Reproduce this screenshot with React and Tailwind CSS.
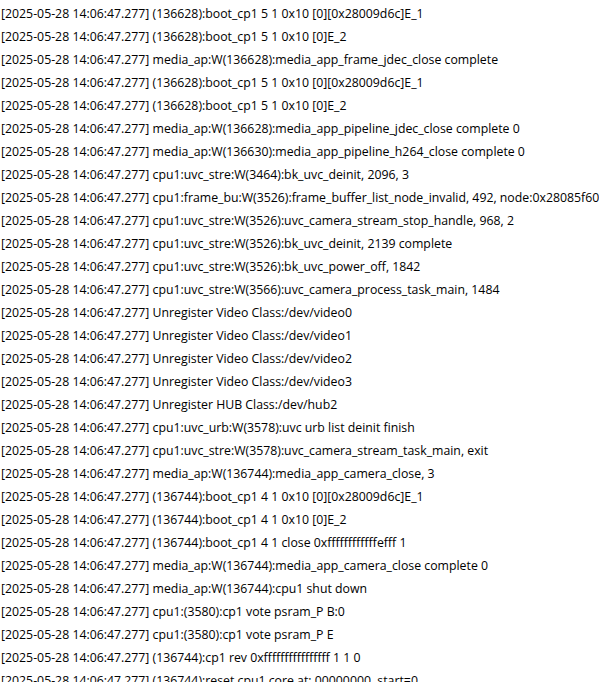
const TS = "[2025-05-28 14:06:47.277] ";

const LINES = [
  "(136628):boot_cp1 5 1 0x10 [0][0x28009d6c]E_1",
  "(136628):boot_cp1 5 1 0x10 [0]E_2",
  "media_ap:W(136628):media_app_frame_jdec_close complete",
  "(136628):boot_cp1 5 1 0x10 [0][0x28009d6c]E_1",
  "(136628):boot_cp1 5 1 0x10 [0]E_2",
  "media_ap:W(136628):media_app_pipeline_jdec_close complete 0",
  "media_ap:W(136630):media_app_pipeline_h264_close complete 0",
  "cpu1:uvc_stre:W(3464):bk_uvc_deinit, 2096, 3",
  "cpu1:frame_bu:W(3526):frame_buffer_list_node_invalid, 492, node:0x28085f60",
  "cpu1:uvc_stre:W(3526):uvc_camera_stream_stop_handle, 968, 2",
  "cpu1:uvc_stre:W(3526):bk_uvc_deinit, 2139 complete",
  "cpu1:uvc_stre:W(3526):bk_uvc_power_off, 1842",
  "cpu1:uvc_stre:W(3566):uvc_camera_process_task_main, 1484",
  "Unregister Video Class:/dev/video0",
  "Unregister Video Class:/dev/video1",
  "Unregister Video Class:/dev/video2",
  "Unregister Video Class:/dev/video3",
  "Unregister HUB Class:/dev/hub2",
  "cpu1:uvc_urb:W(3578):uvc urb list deinit finish",
  "cpu1:uvc_stre:W(3578):uvc_camera_stream_task_main, exit",
  "media_ap:W(136744):media_app_camera_close, 3",
  "(136744):boot_cp1 4 1 0x10 [0][0x28009d6c]E_1",
  "(136744):boot_cp1 4 1 0x10 [0]E_2",
  "(136744):boot_cp1 4 1 close 0xffffffffffffefff 1",
  "media_ap:W(136744):media_app_camera_close complete 0",
  "media_ap:W(136744):cpu1 shut down",
  "cpu1:(3580):cp1 vote psram_P B:0",
  "cpu1:(3580):cp1 vote psram_P E",
  "(136744):cp1 rev 0xffffffffffffffff 1 1 0",
  "(136744):reset cpu1 core at: 00000000, start=0",
];

export default function App() {
  return (
    <div
      className="w-[599px] h-[682px] overflow-hidden bg-white text-black pt-[2px] pl-[1px]"
      style={{ fontFamily: '"Open Sans", "Noto Sans", sans-serif' }}
    >
      {LINES.map((line, i) => (
        <div key={i} className="h-[23px] leading-[23px] text-[12.3px] whitespace-pre">
          {TS + line}
        </div>
      ))}
    </div>
  );
}
